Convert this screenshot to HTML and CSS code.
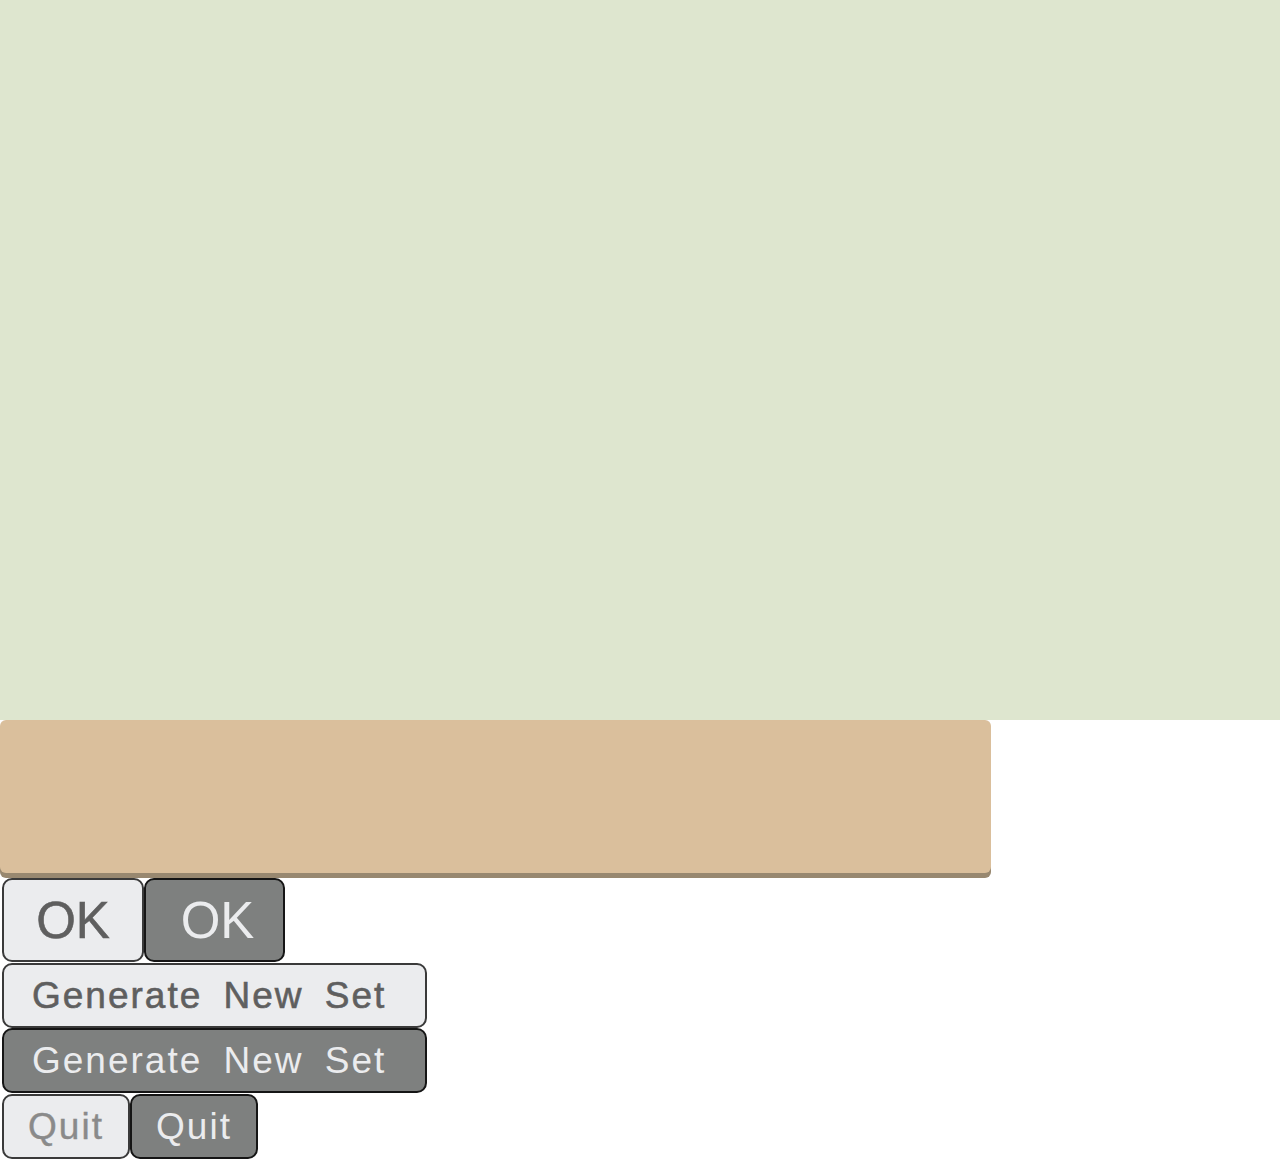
FILE: index.html
```html
<!DOCTYPE html>
<html>
<head>
<meta charset="utf-8">
<link rel="stylesheet" href="styles.css">
</head>
<body>
<div class="canvas"></div>
<div class="panel"></div>
<div class="controls">
  <div class="row row-ok">
    <div class="btn light ok">OK</div>
    <div class="btn dark ok ok-dark">OK</div>
  </div>
  <div class="row row-gen">
    <div class="btn light gen">Generate New Set</div>
  </div>
  <div class="row row-gen2">
    <div class="btn dark gen">Generate New Set</div>
  </div>
  <div class="row row-quit">
    <div class="btn light quit quit-light">Quit</div>
    <div class="btn dark quit">Quit</div>
  </div>
</div>
</body>
</html>
```
FILE: styles.css
```css
html, body {
  margin: 0;
  padding: 0;
  background: #ffffff;
  font-family: "Liberation Sans", Arial, sans-serif;
}
.canvas {
  height: 720px;
  background: #dee6cf;
}
.panel {
  width: 991px;
  height: 153px;
  background: #dabf9c;
  border-radius: 6px;
  box-shadow: 0 5px 0 #988870;
}
.controls {
  display: flex;
  flex-direction: column;
  padding: 5px 1px 0 2px;
}
.row {
  display: flex;
  gap: 0;
}
.row-ok { height: 84px; }
.row-gen { height: 65px; margin-top: 1px; }
.row-gen2 { height: 66px; }
.row-quit { height: 65px; }
.btn {
  box-sizing: border-box;
  display: flex;
  align-items: center;
  justify-content: center;
  border: 2px solid #3a3a3a;
  border-radius: 10px;
  white-space: nowrap;
}
.light {
  background: #ebecee;
  color: #5f5f5f;
  -webkit-text-stroke: 0.6px #5f5f5f;
}
.dark {
  background: #7e807f;
  color: #ebecee;
  border-color: #151515;
}
.ok {
  width: 142px;
  height: 84px;
  font-size: 51px;
  letter-spacing: 0;
}
.ok-dark {
  width: 141px;
  padding-left: 6px;
}
.gen {
  width: 425px;
  height: 65px;
  font-size: 37px;
  letter-spacing: 2px;
  word-spacing: 9px;
  justify-content: flex-start;
  padding-left: 28px;
}
.quit {
  width: 128px;
  height: 65px;
  font-size: 37px;
  letter-spacing: 2px;
}
.quit-light {
  color: #8a8a8a;
  -webkit-text-stroke: 0.4px #8a8a8a;
}
```
